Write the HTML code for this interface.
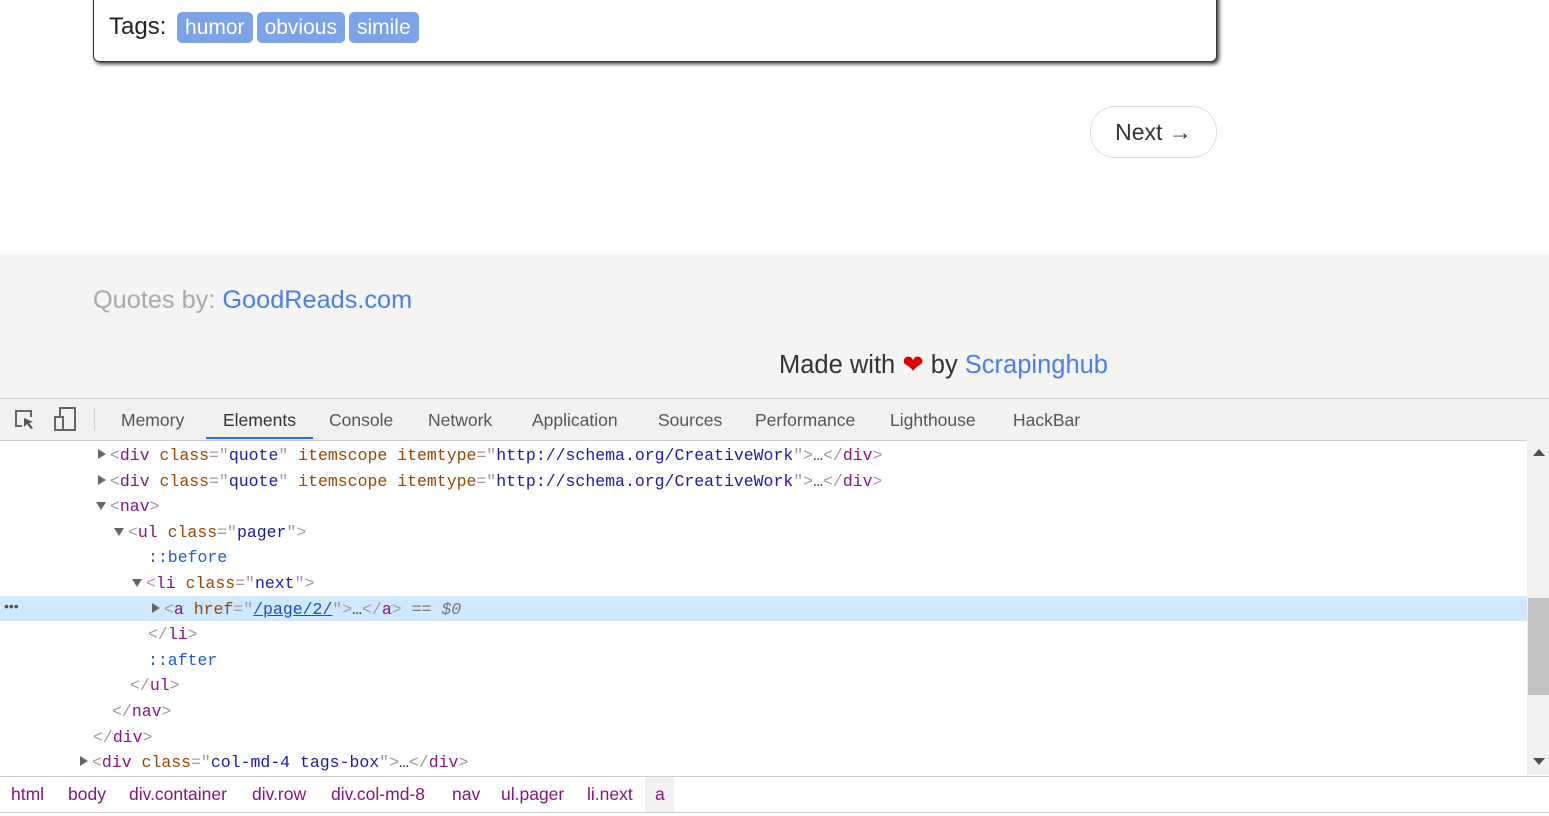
<!DOCTYPE html>
<html><head><style>
body{margin:0;width:1549px;height:816px;overflow:hidden;background:#fff;font-family:"Liberation Sans",sans-serif;position:relative}
.abs{position:absolute}
.card{left:93px;top:-20px;width:1122px;height:80px;border:1px solid #333;border-radius:6px;box-shadow:2px 2px 4px #333;background:#fff}
.tags{left:109px;top:12px;font-size:24px;color:#222}
.tag{display:inline-block;background:#7ca3e6;color:#fff;border-radius:5px;padding:0 8px;font-size:21px;line-height:31px;vertical-align:middle;margin-left:4px}
.next{left:1090px;top:106px;width:125px;height:50px;border:1px solid #ddd;border-radius:25px;font-size:23px;color:#333;text-align:center;line-height:50px}
.foot{left:0;top:254px;width:1549px;height:145px;background:#f4f4f4}
.dt{left:0;top:398px;width:1549px;height:41px;background:#f1f1f1;border-top:1px solid #ccc;border-bottom:1px solid #ccc;font-size:17.5px;color:#555}
.dt span{position:absolute;top:11px}
.code{font-family:"Liberation Mono",monospace;font-size:16.5px;white-space:pre;color:#881280}
.ln{position:absolute;height:25.6px;line-height:25.6px}
.t{color:#881280}.b{color:#a894a6}.n{color:#994500}.v{color:#1a1aa6}.p{color:#1a5ec7}
.tri{position:absolute;width:0;height:0}
.r{border-top:5px solid transparent;border-bottom:5px solid transparent;border-left:8px solid #666}
.d{border-left:5px solid transparent;border-right:5px solid transparent;border-top:8px solid #666}
.crumb{left:0;top:776px;width:1549px;height:35px;border-top:1px solid #ccc;border-bottom:1px solid #ccc;background:#fff;font-size:17.5px;color:#881280}
.crumb span{position:absolute;top:7px}
</style></head><body>
<div class="abs card"></div>
<div class="abs tags">Tags: <span class="tag">humor</span><span class="tag">obvious</span><span class="tag">simile</span></div>
<div class="abs next">Next →</div>
<div class="abs foot">
<div class="abs" style="left:93px;top:32px;font-size:25.3px;color:#aaa">Quotes by: <span style="color:#4a7fe6">GoodReads.com</span></div>
<div class="abs" style="left:779px;top:96px;font-size:25.5px;color:#333">Made with <span style="color:#d00">❤</span> by <span style="color:#4a7fe6">Scrapinghub</span></div>
</div>
<div class="abs dt">
<svg class="abs" style="left:14px;top:10px" width="24" height="22" viewBox="0 0 24 22"><path d="M8 17H2V2h15v6" fill="none" stroke="#666" stroke-width="2"/><path d="M10 9l9 4-4 1 4 5-2 1-4-5-3 3z" fill="#555"/></svg>
<svg class="abs" style="left:53px;top:8px" width="25" height="25" viewBox="0 0 25 25"><rect x="7" y="1" width="15" height="22" fill="none" stroke="#666" stroke-width="2"/><rect x="2" y="10" width="8" height="13" fill="#f1f1f1" stroke="#666" stroke-width="2"/></svg>
<div class="abs" style="left:94px;top:9px;width:1px;height:23px;background:#ccc"></div>
<span style="left:121px">Memory</span><span style="left:223px;color:#333">Elements</span><span style="left:329px">Console</span><span style="left:428px">Network</span><span style="left:532px">Application</span><span style="left:658px">Sources</span><span style="left:755px">Performance</span><span style="left:890px">Lighthouse</span><span style="left:1013px">HackBar</span>
<div class="abs" style="left:206px;top:38px;width:107px;height:2px;background:#1a73e8"></div>
</div>
<div class="abs" style="left:0;top:596px;width:1527px;height:25px;background:#cfe8fc"></div>
<div class="abs" style="left:4px;top:598px;color:#555;font-size:14px">•••</div>
<div class="abs" style="left:1527px;top:440px;width:22px;height:335px;background:#f1f1f1"></div>
<div class="abs" style="left:1528px;top:598px;width:21px;height:97px;background:#c1c1c1"></div>
<div class="abs" style="left:1533px;top:449px;width:0;height:0;border-left:6px solid transparent;border-right:6px solid transparent;border-bottom:7px solid #505050"></div>
<div class="abs" style="left:1533px;top:758px;width:0;height:0;border-left:6px solid transparent;border-right:6px solid transparent;border-top:7px solid #505050"></div>
<div class="abs code" style="left:0;top:443px;width:1527px">
<span class="tri r" style="left:98px;top:6px"></span><div class="ln" style="left:110px;top:0"><span class="b">&lt;</span>div <span class="n">class</span><span class="b">="</span><span class="v">quote</span><span class="b">"</span> <span class="n">itemscope itemtype</span><span class="b">="</span><span class="v">http://schema.org/CreativeWork</span><span class="b">"&gt;</span><span style="color:#333">…</span><span class="b">&lt;/</span>div<span class="b">&gt;</span></div>
<span class="tri r" style="left:98px;top:32px"></span><div class="ln" style="left:110px;top:25.6px"><span class="b">&lt;</span>div <span class="n">class</span><span class="b">="</span><span class="v">quote</span><span class="b">"</span> <span class="n">itemscope itemtype</span><span class="b">="</span><span class="v">http://schema.org/CreativeWork</span><span class="b">"&gt;</span><span style="color:#333">…</span><span class="b">&lt;/</span>div<span class="b">&gt;</span></div>
<span class="tri d" style="left:96px;top:59px"></span><div class="ln" style="left:110px;top:51.2px"><span class="b">&lt;</span>nav<span class="b">&gt;</span></div>
<span class="tri d" style="left:114px;top:85px"></span><div class="ln" style="left:128px;top:76.8px"><span class="b">&lt;</span>ul <span class="n">class</span><span class="b">="</span><span class="v">pager</span><span class="b">"&gt;</span></div>
<div class="ln p" style="left:148px;top:102.4px">::before</div>
<span class="tri d" style="left:132px;top:136px"></span><div class="ln" style="left:146px;top:128px"><span class="b">&lt;</span>li <span class="n">class</span><span class="b">="</span><span class="v">next</span><span class="b">"&gt;</span></div>
<span class="tri r" style="left:152px;top:160px"></span><div class="ln" style="left:164px;top:153.6px"><span class="b">&lt;</span>a <span class="n">href</span><span class="b">="</span><span class="v" style="text-decoration:underline;color:#1a4fc4">/page/2/</span><span class="b">"&gt;</span><span style="color:#333">…</span><span class="b">&lt;/</span>a<span class="b">&gt;</span> <span style="color:#777">== <i>$0</i></span></div>
<div class="ln" style="left:148px;top:179.2px"><span class="b">&lt;/</span>li<span class="b">&gt;</span></div>
<div class="ln p" style="left:148px;top:204.8px">::after</div>
<div class="ln" style="left:130px;top:230.4px"><span class="b">&lt;/</span>ul<span class="b">&gt;</span></div>
<div class="ln" style="left:112px;top:256px"><span class="b">&lt;/</span>nav<span class="b">&gt;</span></div>
<div class="ln" style="left:93px;top:281.6px"><span class="b">&lt;/</span>div<span class="b">&gt;</span></div>
<span class="tri r" style="left:80px;top:313px"></span><div class="ln" style="left:92px;top:307.2px"><span class="b">&lt;</span>div <span class="n">class</span><span class="b">="</span><span class="v">col-md-4 tags-box</span><span class="b">"&gt;</span><span style="color:#333">…</span><span class="b">&lt;/</span>div<span class="b">&gt;</span></div>
</div>
<div class="abs crumb">
<span style="left:11px">html</span><span style="left:68px">body</span><span style="left:129px">div.container</span><span style="left:252px">div.row</span><span style="left:331px">div.col-md-8</span><span style="left:452px">nav</span><span style="left:501px">ul.pager</span><span style="left:587px">li.next</span>
<div class="abs" style="left:645px;top:0;width:29px;height:35px;background:#f1f1f1"></div><span style="left:655px">a</span>
</div>
</body></html>
